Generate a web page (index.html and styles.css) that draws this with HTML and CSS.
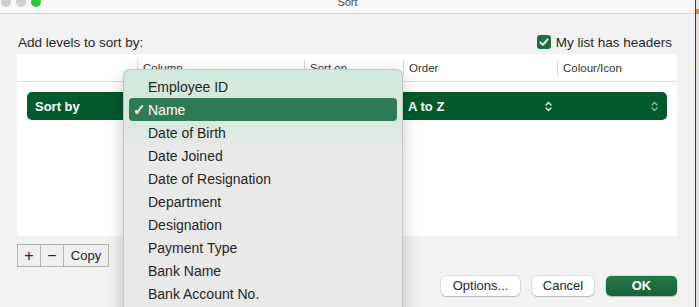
FILE: index.html
```html
<!DOCTYPE html>
<html>
  <head>
    <meta charset="UTF-8">
    <meta name="viewport" content="width=device-width, initial-scale=1.0">
    <title>Sort</title>
    <link rel="stylesheet" href="styles.css">
  </head>
  <body>
    <div class="window">
      <div class="titlebar">
        <div class="titlebar-inner">
          <div class="lights">
            <span class="light"></span>
            <span class="light"></span>
            <span class="light green"></span>
          </div>
          <div class="title">Sort</div>
          <div></div>
        </div>
      </div>

      <div class="content">
        <div class="top-row">
          <span>Add levels to sort by:</span>
          <label class="check-label">
            <svg class="checkbox" width="14" height="14" viewBox="0 0 14 14">
              <rect x="0" y="0" width="14" height="14" rx="3" fill="#1f6d41"/>
              <path d="M3.4 7.3 L5.9 9.8 L10.6 4.3" fill="none" stroke="#fff" stroke-width="1.9" stroke-linecap="round" stroke-linejoin="round"/>
            </svg>
            <span>My list has headers</span>
          </label>
        </div>

        <div class="levels">
          <div class="levels-head">
            <div class="head-cell"></div>
            <div class="head-cell sep">Column</div>
            <div class="head-cell sep">Sort on</div>
            <div class="head-cell sep">Order</div>
            <div class="head-cell sep">Colour/Icon</div>
          </div>
          <div class="level-row">
            <div class="level-cell first">Sort by</div>
            <div class="level-cell"></div>
            <div class="level-cell"></div>
            <div class="level-cell order">
              <span>A to Z</span>
              <svg class="updown" width="7" height="11" viewBox="0 0 7 11">
                <path d="M1 4 L3.5 1.5 L6 4 M1 7 L3.5 9.5 L6 7" fill="none" stroke="currentColor" stroke-width="1.3" stroke-linecap="round" stroke-linejoin="round"/>
              </svg>
            </div>
            <div class="level-cell colour">
              <svg class="updown" width="7" height="11" viewBox="0 0 7 11">
                <path d="M1 4 L3.5 1.5 L6 4 M1 7 L3.5 9.5 L6 7" fill="none" stroke="currentColor" stroke-width="1.3" stroke-linecap="round" stroke-linejoin="round"/>
              </svg>
            </div>
          </div>
        </div>

        <div class="tools">
          <div class="tool">+</div>
          <div class="tool">&minus;</div>
          <div class="tool copy">Copy</div>
        </div>

        <div class="actions">
          <div class="btn options">Options...</div>
          <div class="btn cancel">Cancel</div>
          <div class="btn ok">OK</div>
        </div>

        <div class="menu">
          <div class="menu-item"><span></span><span>Employee ID</span></div>
          <div class="menu-item selected"><span>&#10003;</span><span>Name</span></div>
          <div class="menu-item"><span></span><span>Date of Birth</span></div>
          <div class="menu-item"><span></span><span>Date Joined</span></div>
          <div class="menu-item"><span></span><span>Date of Resignation</span></div>
          <div class="menu-item"><span></span><span>Department</span></div>
          <div class="menu-item"><span></span><span>Designation</span></div>
          <div class="menu-item"><span></span><span>Payment Type</span></div>
          <div class="menu-item"><span></span><span>Bank Name</span></div>
          <div class="menu-item"><span></span><span>Bank Account No.</span></div>
        </div>
      </div>
    </div>
    <div class="sheet-edge"></div>
  </body>
</html>
```

FILE: styles.css
```css
body {
  font-family: 'Liberation Sans', Arial, sans-serif;
  margin: 0;
  padding: 0;
  display: flex;
  width: 699px;
  height: 307px;
  overflow: hidden;
  background-color: #f2f2f2;
  color: #262626;
}
.window {
  width: 695px;
  height: 307px;
  background-color: #f2f2f2;
  display: flex;
  flex-direction: column;
  overflow: hidden;
}
.sheet-edge {
  flex: 1;
  border-left: 1px solid #3c3c3c;
  background: linear-gradient(#e6e6e6 0, #e6e6e6 9px, #e8873a 9px, #e8873a 14px, #e4e0d4 14px, #e4e0d4 70px, #e2e2e2 70px);
}

/* barra de título cortada no topo */
.titlebar {
  height: 13px;
  border-bottom: 1px solid #d3d3d3;
  background-color: #f6f6f6;
  overflow: hidden;
}
.titlebar-inner {
  display: grid;
  grid-template-columns: 1fr auto 1fr;
  align-items: center;
  height: 16px;
  margin-top: -6px;
}
.lights {
  display: flex;
  gap: 5px;
  padding-left: 1px;
}
.light {
  width: 10px;
  height: 10px;
  border-radius: 50%;
  background-color: #d0d0d0;
}
.light.green {
  background-color: #2bc840;
}
.title {
  font-size: 11px;
  color: #4a4a4a;
}

.content {
  position: relative; /* referência para o menu suspenso */
  flex: 1;
  padding: 20px 18px 0 17px;
  font-size: 13px;
}
.top-row {
  display: flex;
  justify-content: space-between;
  align-items: center;
  height: 16px;
  margin-bottom: 4px;
  padding-left: 1px;
  font-size: 13.5px;
}
.check-label {
  display: flex;
  align-items: center;
  gap: 5px;
  margin-right: 5px;
}

.levels {
  height: 182px;
  background-color: #fff;
}
.levels-head {
  display: grid;
  grid-template-columns: 120px 167px 99px 154px 1fr;
  align-items: center;
  height: 27px;
  border-bottom: 1px solid #dedede;
  font-size: 11.5px;
  color: #333;
}
.head-cell {
  height: 16px;
  line-height: 16px;
  padding-left: 5px;
}
.head-cell.sep {
  border-left: 1px solid #dadada;
}
.level-row {
  display: grid;
  grid-template-columns: 110px 167px 99px 154px 1fr;
  align-items: center;
  height: 28px;
  margin: 10px 10px 0;
  border-radius: 5px;
  background-color: #005a2c;
  color: #fff;
  font-weight: bold;
}
.level-cell.first {
  padding-left: 8px;
}
.level-cell.order {
  display: flex;
  justify-content: space-between;
  align-items: center;
  padding: 0 5px;
}
.level-cell.colour {
  display: flex;
  justify-content: flex-end;
  padding-right: 9px;
  color: #8fb8a0;
}
.updown {
  display: block;
}

.tools {
  display: flex;
  width: fit-content;
  margin-top: 8px;
  border: 1px solid #b3b3b3;
  background-color: #efefef;
}
.tool {
  width: 22px;
  height: 21px;
  line-height: 21px;
  text-align: center;
  font-size: 16px;
  color: #222;
}
.tool + .tool {
  border-left: 1px solid #b3b3b3;
}
.tool.copy {
  width: 44px;
  font-size: 13px;
}

.actions {
  display: flex;
  justify-content: flex-end;
  gap: 12px;
  margin-top: 9px;
}
.btn {
  height: 20px;
  line-height: 20px;
  text-align: center;
  border-radius: 5px;
  background-color: #fff;
  box-shadow: 0 0 0 0.5px rgba(0, 0, 0, 0.18), 0 1px 1px rgba(0, 0, 0, 0.15);
  color: #262626;
}
.btn.options {
  width: 79px;
}
.btn.cancel {
  width: 62px;
}
.btn.ok {
  width: 71px;
  background: linear-gradient(#25784a, #17633a);
  color: #fff;
  font-weight: bold;
}

/* menu suspenso da coluna */
.menu {
  position: absolute;
  left: 123px;
  top: 55px;
  width: 268px;
  height: 262px;
  padding: 5px 5px;
  border: 1px solid rgba(0, 0, 0, 0.14);
  border-radius: 7px;
  background: linear-gradient(#d3e8dc 0, #d7e8de 48px, #e9e9e9 82px);
  box-shadow: 0 6px 18px rgba(0, 0, 0, 0.22);
  font-size: 14px;
  color: #262626;
}
.menu-item {
  display: grid;
  grid-template-columns: 19px 1fr;
  align-items: center;
  height: 23px;
  border-radius: 4px;
}
.menu-item span:first-child {
  padding-left: 4px;
  font-size: 15px;
  font-weight: bold;
}
.menu-item.selected {
  background-color: #307b57;
  color: #fff;
}
```
